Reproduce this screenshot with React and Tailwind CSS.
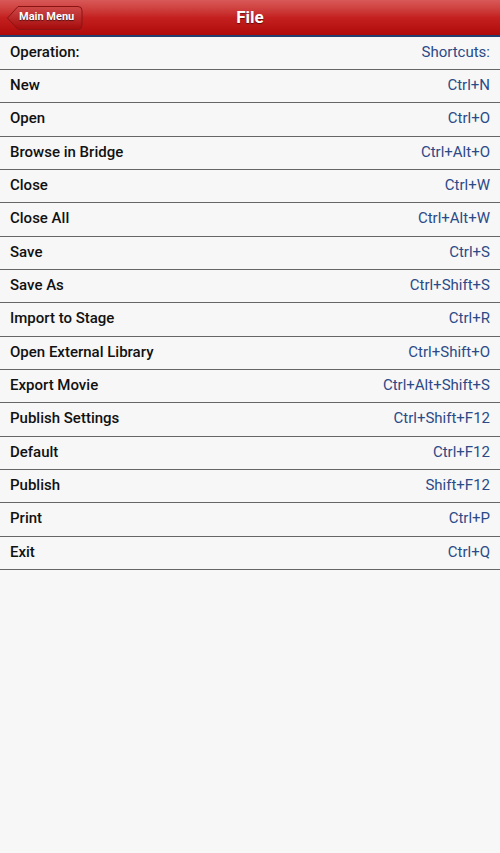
import { useState } from "react";

const items = [
  ["New", "Ctrl+N"],
  ["Open", "Ctrl+O"],
  ["Browse in Bridge", "Ctrl+Alt+O"],
  ["Close", "Ctrl+W"],
  ["Close All", "Ctrl+Alt+W"],
  ["Save", "Ctrl+S"],
  ["Save As", "Ctrl+Shift+S"],
  ["Import to Stage", "Ctrl+R"],
  ["Open External Library", "Ctrl+Shift+O"],
  ["Export Movie", "Ctrl+Alt+Shift+S"],
  ["Publish Settings", "Ctrl+Shift+F12"],
  ["Default", "Ctrl+F12"],
  ["Publish", "Shift+F12"],
  ["Print", "Ctrl+P"],
  ["Exit", "Ctrl+Q"],
];

function BackButton() {
  return (
    <button className="relative ml-[7px] flex h-[26px] items-center">
      <svg className="absolute left-0 top-0" width="76" height="26" viewBox="0 0 76 26">
        <defs>
          <linearGradient id="bb" x1="0" y1="0" x2="0" y2="1">
            <stop offset="0" stopColor="#cf4a4a" />
            <stop offset="1" stopColor="#a50a0a" />
          </linearGradient>
        </defs>
        <path
          d="M0.5 13 L11 1.5 H71 Q75 1.5 75 5.5 V20.5 Q75 24.5 71 24.5 H11 Z"
          fill="url(#bb)"
          stroke="#8a1414"
          strokeWidth="1"
        />
      </svg>
      <span className="relative pl-[12px] pr-[8px] text-[11px] font-bold text-white [text-shadow:0_1px_1px_rgba(0,0,0,0.6)]">
        Main Menu
      </span>
    </button>
  );
}

export default function App() {
  const [selected, setSelected] = useState(null);

  return (
    <div className="flex h-[853px] w-[500px] flex-col bg-[#f7f7f7] font-['Roboto',sans-serif]">
      {/* Title bar */}
      <div className="relative flex h-[37px] shrink-0 items-center border-b-2 border-[#233f70] bg-gradient-to-b from-[#d85858] via-[#c42020] to-[#b00808]">
        <BackButton />
        <h1 className="pointer-events-none absolute left-0 right-0 text-center text-[17px] font-bold text-white [text-shadow:0_1px_1px_rgba(0,0,0,0.5)]">
          File
        </h1>
      </div>

      {/* Column heads */}
      <div className="flex h-[33px] shrink-0 items-center justify-between border-b border-[#666] px-[10px] pb-[2px] text-[15px]">
        <span className="font-medium text-[#111]">Operation:</span>
        <span className="text-[#2b4a88]">Shortcuts:</span>
      </div>

      {items.map(([name, keys], i) => (
        <div
          key={name}
          onClick={() => setSelected(i)}
          className={`flex h-[33.33px] shrink-0 items-center justify-between border-b border-[#666] px-[10px] pb-[2px] text-[15px] ${
            selected === i ? "bg-[#e8e8e8]" : ""
          }`}
        >
          <span className="font-medium text-[#111]">{name}</span>
          <span className="text-[#2b4a88]">{keys}</span>
        </div>
      ))}
    </div>
  );
}
